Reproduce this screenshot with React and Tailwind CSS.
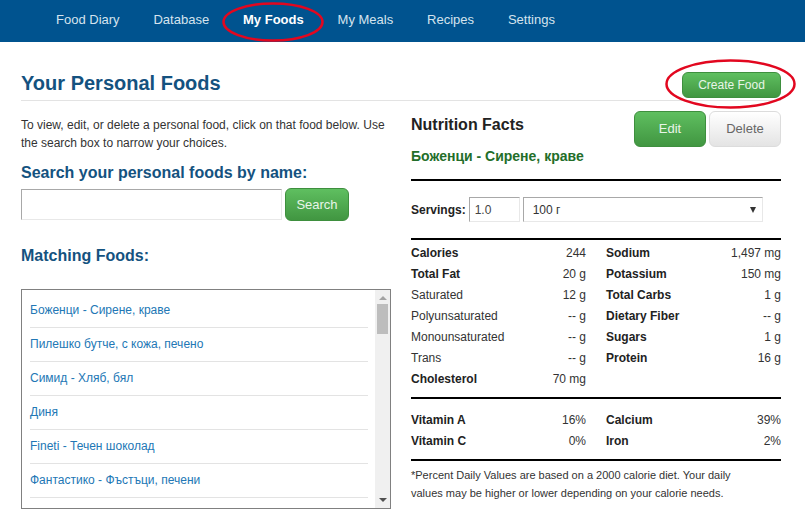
const navItems = ["Food Diary", "Database", "My Foods", "My Meals", "Recipes", "Settings"];

const foods = [
  "Боженци - Сирене, краве",
  "Пилешко бутче, с кожа, печено",
  "Симид - Хляб, бял",
  "Диня",
  "Fineti - Течен шоколад",
  "Фантастико - Фъстъци, печени",
];

const macros = [
  [["Calories", "244", true], ["Sodium", "1,497 mg", true]],
  [["Total Fat", "20 g", true], ["Potassium", "150 mg", true]],
  [["Saturated", "12 g"], ["Total Carbs", "1 g", true]],
  [["Polyunsaturated", "-- g"], ["Dietary Fiber", "-- g", true]],
  [["Monounsaturated", "-- g"], ["Sugars", "1 g", true]],
  [["Trans", "-- g"], ["Protein", "16 g", true]],
  [["Cholesterol", "70 mg", true]],
];

const vitamins = [
  [["Vitamin A", "16%", true], ["Calcium", "39%", true]],
  [["Vitamin C", "0%", true], ["Iron", "2%", true]],
];

function NutrientRows({ rows }) {
  return rows.map((row, i) => (
    <div key={i} className="grid h-[21px] grid-cols-2 items-center gap-x-5">
      {row.map(([label, value, bold]) => (
        <div key={label} className="flex justify-between">
          <span className={bold ? "font-bold text-[#222]" : ""}>{label}</span>
          <span>{value}</span>
        </div>
      ))}
    </div>
  ));
}

function RedCircle({ className, w, h }) {
  return (
    <svg className={`pointer-events-none absolute ${className}`} width={w} height={h} viewBox={`0 0 ${w} ${h}`} fill="none">
      <ellipse cx={w / 2} cy={h / 2} rx={w / 2 - 1.5} ry={h / 2 - 1.5} stroke="#e2071f" strokeWidth="2.5" />
    </svg>
  );
}

const greenBtn = "rounded-md border border-[#3e8f3e] bg-gradient-to-b from-[#5fbf60] to-[#419641] text-[#e8f5e8]";

export default function App() {
  return (
    <div className="relative h-[531px] w-[805px] overflow-hidden bg-white font-['Liberation_Sans',sans-serif] text-[12px] text-[#333]">
      <nav className="flex h-[42px] items-center gap-[33.9px] bg-[#00538f] pb-[2px] pl-[56px] text-[13px] text-[#d5e3ee]">
        {navItems.map((item) => (
          <span key={item} className={item === "My Foods" ? "font-bold text-white" : ""}>
            {item}
          </span>
        ))}
      </nav>
      <RedCircle className="left-[222px] top-[2px]" w={102} h={40} />
      <RedCircle className="left-[665px] top-[59px]" w={131} h={50} />

      <div className="px-[21px]">
        <div className="mr-[3px] flex items-start justify-between border-b border-[#e3e3e3] pb-[2px] pt-[30px]">
          <h1 className="-mt-px text-[20px] font-bold leading-[24px] text-[#14527f]">Your Personal Foods</h1>
          <button className={`${greenBtn} h-[26px] w-[99px] text-[12px]`}>Create Food</button>
        </div>

        <div className="flex gap-5">
          <div className="w-[370px] pt-[15px]">
            <p className="w-[366px] leading-[18px]">
              To view, edit, or delete a personal food, click on that food below. Use the search box to narrow your choices.
            </p>
            <h2 className="mt-[11px] text-[16px] font-bold leading-[20px] text-[#14527f]">Search your personal foods by name:</h2>
            <div className="mt-[5px] flex items-center gap-[3px]">
              <input className="h-[31px] w-[261px] border border-[#e8e8e8] border-l-[#a8a8a8] border-t-[#a8a8a8]" />
              <button className={`${greenBtn} h-[33px] w-[64px] text-[13px]`}>Search</button>
            </div>
            <h2 className="mt-[25px] text-[16px] font-bold leading-[20px] text-[#14527f]">Matching Foods:</h2>
            <div className="mt-[23px] flex h-[220px] border border-[#808080]">
              <ul className="h-full flex-1 overflow-hidden pl-2 pr-[7px] pt-[4px]">
                {foods.map((food) => (
                  <li key={food} className="flex h-[34px] items-center border-b border-[#e3e3e3] pb-[2px] text-[#2277b5]">
                    {food}
                  </li>
                ))}
              </ul>
              <div className="flex w-[15px] flex-col items-center bg-[#f0f0f0]">
                <span className="mt-[6px] h-0 w-0 border-x-[4px] border-b-[4px] border-x-transparent border-b-[#a3a3a3]" />
                <span className="mt-[4px] h-[30px] w-[11px] bg-[#bdbdbd]" />
                <span className="mb-[6px] mt-auto h-0 w-0 border-x-[4px] border-t-[4px] border-x-transparent border-t-[#505050]" />
              </div>
            </div>
          </div>

          <div className="w-[370px]">
            <div className="flex items-start justify-between pt-[10px]">
              <div className="pt-[4px]">
                <h2 className="text-[16px] font-bold leading-[20px] text-[#222]">Nutrition Facts</h2>
                <div className="mt-[11px] text-[14px] font-bold leading-[20px] text-[#236e2a]">Боженци - Сирене, краве</div>
              </div>
              <div className="flex gap-[3px]">
                <button className={`${greenBtn} h-[36px] w-[72px] text-[13px]`}>Edit</button>
                <button className="h-[36px] w-[72px] rounded-md border border-[#dcdcdc] bg-gradient-to-b from-white to-[#e4e4e4] text-[13px] text-[#666]">Delete</button>
              </div>
            </div>

            <div className="mt-[13px] flex h-[61px] items-center border-y-2 border-black">
              <span className="font-bold text-[#222]">Servings:</span>
              <input
                readOnly
                value="1.0"
                className="ml-[3px] h-[25px] w-[51px] border border-[#e8e8e8] border-l-[#a8a8a8] border-t-[#a8a8a8] px-[5px] text-[12px] text-[#444]"
              />
              <div className="ml-[3px] flex h-[25px] w-[240px] items-center justify-between border border-[#e8e8e8] border-l-[#a8a8a8] border-t-[#a8a8a8] pl-[9px] pr-[6px]">
                <span>100 г</span>
                <span className="h-0 w-0 border-x-[3.5px] border-t-[6px] border-x-transparent border-t-[#333]" />
              </div>
            </div>

            <div className="border-b-2 border-black pb-[8px] pt-[2px]">
              <NutrientRows rows={macros} />
            </div>
            <div className="border-b-2 border-black pb-[8px] pt-[10px]">
              <NutrientRows rows={vitamins} />
            </div>
            <p className="w-[340px] pt-[5px] text-[11px] leading-[18px]">
              *Percent Daily Values are based on a 2000 calorie diet. Your daily values may be higher or lower depending on your calorie needs.
            </p>
          </div>
        </div>
      </div>
    </div>
  );
}
